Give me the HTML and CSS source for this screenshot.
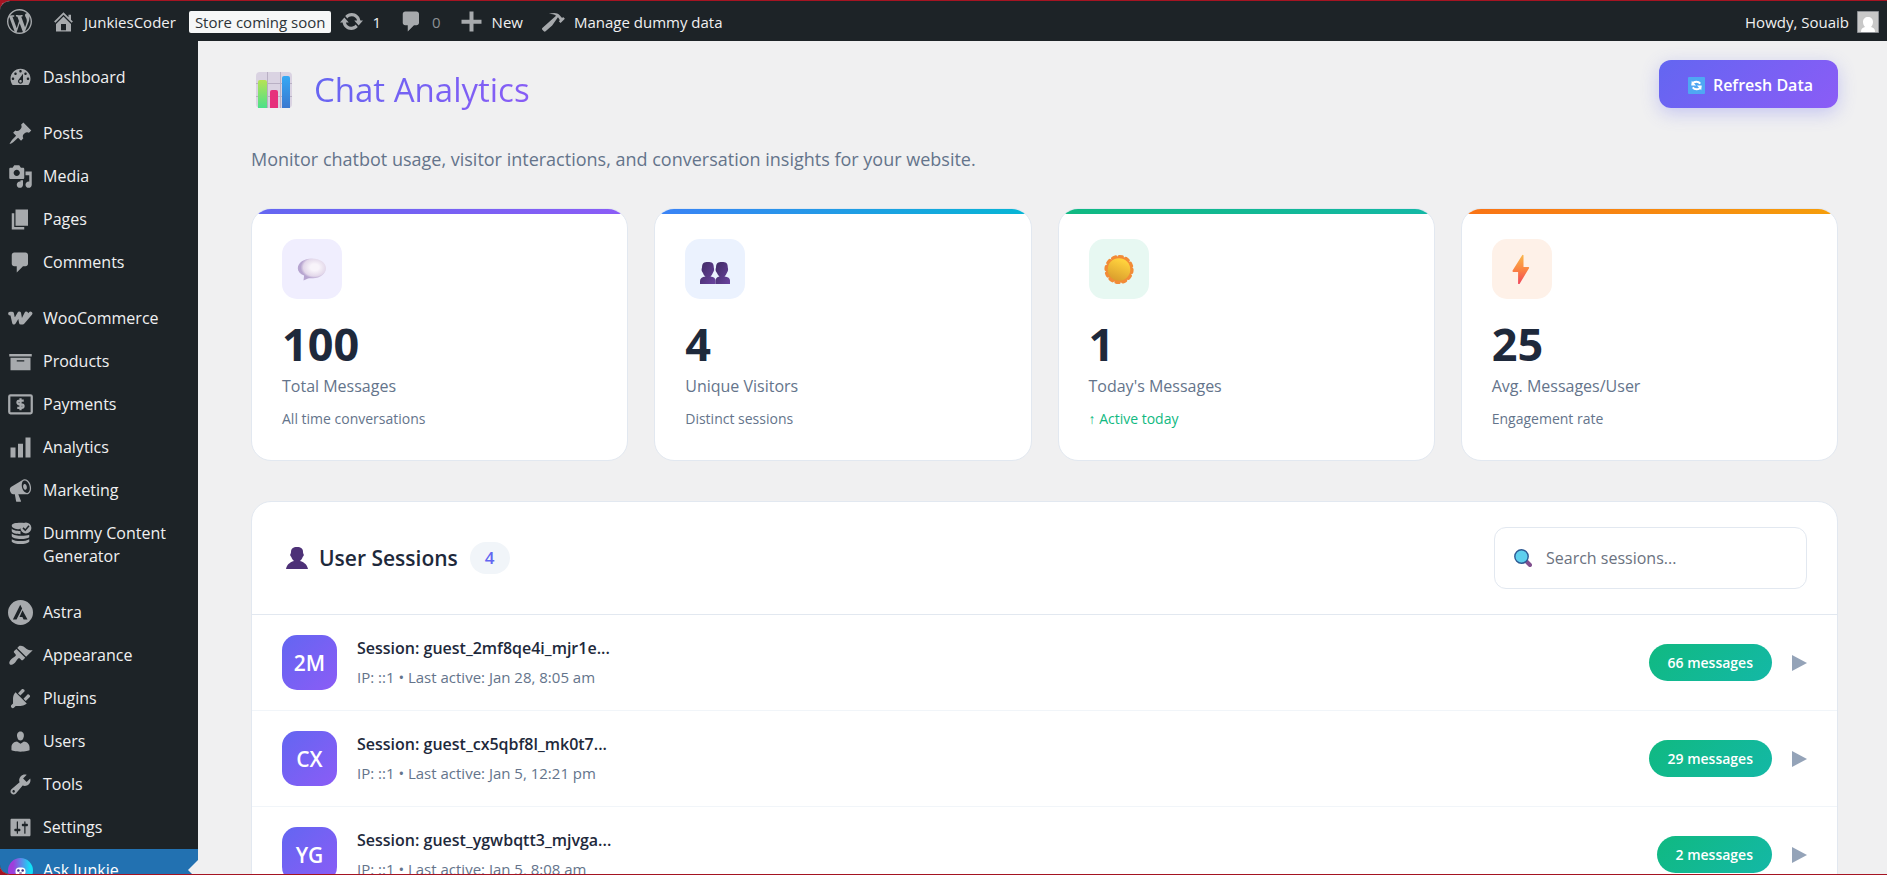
FILE: index.html
```html
<!DOCTYPE html>
<html lang="en">
<head>
    <meta charset="UTF-8">
    <meta name="viewport" content="width=device-width, initial-scale=1.0">
    <title>Chat Analytics</title>
    <link rel="stylesheet" href="styles.css">
</head>
<body>
    <header id="adminbar">
        <a href="#" class="bar-item bar-logo" aria-label="About WordPress"><svg viewBox="0 0 20 20"><path d="M20 10c0-5.51-4.49-10-10-10C4.48 0 0 4.49 0 10c0 5.52 4.48 10 10 10 5.51 0 10-4.48 10-10zM7.78 15.37L4.37 6.22c.55-.02 1.17-.08 1.17-.08.5-.06.44-1.13-.06-1.11 0 0-1.45.11-2.37.11-.18 0-.37 0-.58-.01C4.12 2.69 6.87 1.11 10 1.11c2.33 0 4.45.87 6.05 2.34-.68-.11-1.65.39-1.65 1.58 0 .74.45 1.36.9 2.1.35.61.55 1.36.55 2.46 0 1.49-1.4 5-1.4 5l-3.03-8.37c.54-.02.82-.17.82-.17.5-.05.44-1.25-.06-1.22 0 0-1.44.12-2.38.12-.87 0-2.33-.12-2.33-.12-.5-.03-.56 1.2-.06 1.22l.92.08 1.26 3.41zM17.41 10c.24-.64.74-1.87.43-4.25.7 1.29 1.05 2.71 1.05 4.25 0 3.29-1.73 6.24-4.4 7.78.97-2.59 1.94-5.2 2.92-7.78zM6.1 18.09C3.12 16.65 1.11 13.53 1.11 10c0-1.3.23-2.48.72-3.59C3.25 10.3 4.67 14.2 6.1 18.09zm4.03-6.63l2.58 6.98c-.86.29-1.76.45-2.71.45-.79 0-1.57-.11-2.29-.33.81-2.38 1.62-4.74 2.42-7.1z"/></svg></a>
        <a href="#" class="bar-item bar-site"><svg viewBox="0 0 20 20"><path d="M16 8.5l1.53 1.53-1.06 1.06L10 4.6l-6.47 6.49-1.06-1.06L10 2.5l4 4v-2h2v4zm-6-2.46l6 5.99V18H4v-5.97zM12 17v-5H8v5h4z"/></svg>JunkiesCoder</a>
        <a href="#" class="bar-badge">Store coming soon</a>
        <a href="#" class="bar-item bar-updates"><svg viewBox="0 0 20 20"><path d="M10.2 3.28c3.53 0 6.43 2.61 6.92 6h2.08l-3.5 4-3.5-4h2.32c-.45-1.97-2.21-3.45-4.32-3.45-1.45 0-2.73.71-3.54 1.78L4.95 5.66C6.23 4.2 8.11 3.28 10.2 3.28zm-.4 13.44c-3.52 0-6.43-2.61-6.92-6H.8l3.5-4c1.17 1.33 2.33 2.67 3.5 4H5.48c.45 1.97 2.21 3.45 4.32 3.45 1.45 0 2.73-.71 3.54-1.78l1.71 1.95c-1.28 1.46-3.15 2.38-5.25 2.38z"/></svg>1</a>
        <a href="#" class="bar-item bar-comments"><svg viewBox="0 0 20 20"><path d="M5 2h9c1.1 0 2 .9 2 2v7c0 1.1-.9 2-2 2h-2l-5 5v-5H5c-1.1 0-2-.9-2-2V4c0-1.1.9-2 2-2z"/></svg>0</a>
        <a href="#" class="bar-item bar-new"><svg viewBox="0 0 20 20"><path d="M18 8.500v3.200h-6.400V18H8.400v-6.300H2V8.500h6.400V2h3.200v6.500z"/></svg>New</a>
        <a href="#" class="bar-item bar-dummy"><svg viewBox="0 0 20 20"><path d="M17.7 6.32l1.41 1.42-3.47 3.41-1.42-1.42.84-.82c-.32-.76-.81-1.57-1.51-2.31l-4.61 6.59-5.26 4.7c-.39.39-1.02.39-1.42 0l-1.2-1.21c-.39-.39-.39-1.02 0-1.41l10.97-9.92c-1.37-.86-3.21-1.46-5.67-1.48 2.7-.82 4.95-.93 6.58-.3 1.7.66 2.82 2.2 3.91 3.58z"/></svg>Manage dummy data</a>
        <a href="#" class="bar-item bar-user">Howdy, Souaib
            <svg viewBox="0 0 22 22"><path fill="#c8c8c8" stroke="#8c8f94" d="M.5.5h21v21H.5z"/><path fill="#fff" d="M11 6c3 0 5 2 5 5 0 2-1 4-2 5 3 1 4 2 4 5H4c0-3 1-4 4-5-1-1-2-3-2-5 0-3 2-5 5-5z"/></svg>
        </a>
    </header>

    <div id="wrap">
        <nav id="adminmenu">
            <ul>
                <li><a href="#"><svg viewBox="0 0 20 20"><path d="M3.76 16h12.48c1.1-1.37 1.76-3.11 1.76-5 0-4.42-3.58-8-8-8s-8 3.58-8 8c0 1.89.66 3.63 1.76 5zM10 4c.55 0 1 .45 1 1s-.45 1-1 1-1-.45-1-1 .45-1 1-1zM6 6c.55 0 1 .45 1 1s-.45 1-1 1-1-.45-1-1 .45-1 1-1zm8 0c.55 0 1 .45 1 1s-.45 1-1 1-1-.45-1-1 .45-1 1-1zm-5.37 5.55L12 7v6c0 1.1-.9 2-2 2s-2-.9-2-2c0-.57.24-1.08.63-1.45zM4 10c.55 0 1 .45 1 1s-.45 1-1 1-1-.45-1-1 .45-1 1-1zm12 0c.55 0 1 .45 1 1s-.45 1-1 1-1-.45-1-1 .45-1 1-1zm-5 3c0-.55-.45-1-1-1s-1 .45-1 1 .45 1 1 1 1-.45 1-1z"/></svg>Dashboard</a></li>
            </ul>
            <ul>
                <li><a href="#"><svg viewBox="0 0 20 20"><path d="M10.44 3.02l1.82-1.82 6.36 6.35-1.83 1.82c-1.05-.68-2.48-.57-3.41.36l-.75.75c-.92.93-1.04 2.35-.35 3.41l-1.83 1.82-2.41-2.41-2.8 2.79c-.42.42-3.38 2.71-3.8 2.29s1.86-3.39 2.28-3.81l2.79-2.79L4.1 9.36l1.83-1.82c1.05.69 2.48.57 3.4-.36l.75-.75c.93-.92 1.05-2.35.36-3.41z"/></svg>Posts</a></li>
                <li><a href="#"><svg viewBox="0 0 20 20"><path d="M13 11V4c0-.55-.45-1-1-1h-1.67L9 1H5L3.67 3H2c-.55 0-1 .45-1 1v7c0 .55.45 1 1 1h10c.55 0 1-.45 1-1zM7 4.5c1.38 0 2.5 1.12 2.5 2.5S8.38 9.5 7 9.5 4.5 8.38 4.5 7 5.62 4.5 7 4.5zM14 6h5v10.5c0 1.38-1.12 2.5-2.5 2.5S14 17.88 14 16.5s1.12-2.5 2.5-2.5c.17 0 .34.02.5.05V9h-3V6zm-4 8.05V13h2v3.5c0 1.38-1.12 2.5-2.5 2.5S7 17.88 7 16.5 8.12 14 9.5 14c.17 0 .34.02.5.05z"/></svg>Media</a></li>
                <li><a href="#"><svg viewBox="0 0 20 20"><path d="M6 15V2h10v13H6zm-1 1h8v2H3V5h2v11z"/></svg>Pages</a></li>
                <li><a href="#"><svg viewBox="0 0 20 20"><path d="M5 2h9c1.1 0 2 .9 2 2v7c0 1.1-.9 2-2 2h-2l-5 5v-5H5c-1.1 0-2-.9-2-2V4c0-1.1.9-2 2-2z"/></svg>Comments</a></li>
            </ul>
            <ul>
                <li><a href="#"><svg viewBox="0 0 20 20"><path fill="none" stroke="currentColor" stroke-width="3" stroke-linecap="round" stroke-linejoin="round" d="M1.6 6h1.600l1.600 7.300L9 6l1.300 7.300h1.500L18 6M11 13.300L14.600 6"/></svg>WooCommerce</a></li>
                <li><a href="#"><svg viewBox="0 0 20 20"><path d="M19 4v2H1V4h18zM2 7h16v10H2V7zm11 3V9H7v1h6z"/></svg>Products</a></li>
                <li><a href="#"><svg viewBox="0 0 20 20"><rect x="1" y="2.6" width="18" height="14.4" rx="1" fill="none" stroke="currentColor" stroke-width="1.8"/><path fill="none" stroke="currentColor" stroke-width="1.8" d="M10 5v9.6M12.6 6.9H9.2c-2.2 0-2.2 2.9 0 2.9h1.6c2.2 0 2.2 2.9 0 2.9H7.4"/></svg>Payments</a></li>
                <li><a href="#"><svg viewBox="0 0 20 20"><path d="M18 18V2h-4v16h4zm-6 0V7H8v11h4zm-6 0v-8H2v8h4z"/></svg>Analytics</a></li>
                <li><a href="#"><svg viewBox="0 0 20 20"><path d="M18.15 5.94c.46 1.62.38 3.22-.02 4.48-.42 1.28-1.26 2.18-2.3 2.48-.16.06-.26.06-.4.06-.06.02-.12.02-.18.02-.06.02-.14.02-.22.02h-6.8l2.22 5.5c.02.14-.06.26-.14.34-.08.1-.24.16-.34.16H6.95c-.1 0-.26-.06-.34-.16-.08-.08-.16-.2-.14-.34l-1-5.5H4.25l-.02-.02c-.5.06-1.08-.18-1.54-.62s-.88-1.08-1.06-1.88c-.24-.8-.2-1.56-.02-2.2.18-.62.58-1.08 1.06-1.3l.02-.02 9-5.4c.1-.06.18-.1.24-.16.06-.04.14-.08.24-.12.16-.08.28-.12.5-.18 1.04-.3 2.24.1 3.22.98s1.84 2.24 2.26 3.86zm-2.58 5.98h-.02c.4-.1.74-.34 1.04-.7.58-.7.86-1.76.86-3.04 0-.64-.1-1.3-.28-1.98-.34-1.36-1.02-2.5-1.78-3.24s-1.68-1.1-2.46-.88c-.82.22-1.4.96-1.7 2-.32 1.04-.28 2.36.06 3.72.38 1.36 1 2.5 1.8 3.24.78.74 1.62 1.1 2.48.88zm-2.54-7.08c.22-.04.42-.02.62.04.38.16.76.48 1.02 1s.42 1.2.42 1.78c0 .3-.04.56-.12.8-.18.48-.44.84-.86.94-.34.1-.8-.06-1.14-.4s-.64-.86-.78-1.5c-.18-.62-.12-1.24.02-1.72s.48-.84.82-.94z"/></svg>Marketing</a></li>
                <li><a href="#"><svg viewBox="0 0 20 20"><path d="M3 3.500C3 1 14 1 15 2.500L9 6.500C6 6.500 3 5.500 3 3.500zM3 6c1 1.500 4 2 7 2v2.500c-3 0-7-.5-7-2.500zM3 10c2 2 10 2.500 14 1v2c-2 2-14 2-14-1zM3 14.500c3 2 11 2 14 0v2c-2 2.500-12 2.500-14 0z"/><circle cx="14.300" cy="5.500" r="4.400"/><path fill="none" stroke="#1d2327" stroke-width="1.200" d="M12 5.500l1.800 1.800 3-3.500"/></svg>Dummy Content Generator</a></li>
            </ul>
            <ul>
                <li><a href="#"><svg viewBox="0 0 20 20"><circle cx="10" cy="10" r="10"/><path fill="#1d2327" d="M9.800 3.800l1.500 3-4.500 8.800H3.900zM11.600 8.200l4 7.400h-3.100l-1-2.100H9.200z"/></svg>Astra</a></li>
                <li><a href="#"><svg viewBox="0 0 20 20"><path d="M14.48 11.06L7.41 3.99l1.5-1.5c.5-.56 2.3-.47 3.51.32 1.21.8 1.43 1.28 2.91 2.1 1.18.64 2.45 1.26 4.45.85zm-.71.71L6.7 4.7 4.93 6.47c-.39.39-.39 1.02 0 1.41l1.06 1.06c.39.39.39 1.03 0 1.42-.6.6-1.43 1.11-2.21 1.69-.35.26-.7.53-1.01.84C1.43 14.23.4 16.08 1.4 17.07c.99 1 2.84-.03 4.18-1.36.31-.31.58-.66.85-1.02.57-.78 1.08-1.61 1.69-2.21.39-.39 1.02-.39 1.41 0l1.06 1.06c.39.39 1.02.39 1.41 0z"/></svg>Appearance</a></li>
                <li><a href="#"><svg viewBox="0 0 20 20"><path d="M13.11 4.36L9.87 7.6 8 5.73l3.24-3.24c.35-.34 1.05-.2 1.56.32.52.51.66 1.21.31 1.55zm-8 1.77l.91-1.12 9.01 9.01-1.19.84c-.71.71-2.63 1.16-3.82 1.16H6.14L4.9 17.26c-.59.59-1.54.59-2.12 0-.59-.58-.59-1.53 0-2.12l1.24-1.24v-3.88c0-1.13.4-3.19 1.09-3.89zm7.26 3.97l3.24-3.24c.34-.35 1.04-.21 1.55.31.52.51.66 1.21.31 1.55l-3.24 3.25z"/></svg>Plugins</a></li>
                <li><a href="#"><svg viewBox="0 0 20 20"><path d="M10 9.25c-2.27 0-2.73-3.44-2.73-3.44C7 4.02 7.82 2 9.97 2c2.16 0 2.98 2.02 2.71 3.81 0 0-.41 3.44-2.68 3.44zm0 2.57L12.72 10c2.39 0 4.52 2.33 4.52 4.53v2.49s-3.65 1.13-7.24 1.13c-3.65 0-7.24-1.13-7.24-1.13v-2.49c0-2.25 1.94-4.48 4.47-4.48z"/></svg>Users</a></li>
                <li><a href="#"><svg viewBox="0 0 20 20"><path d="M16.68 9.77c-1.34 1.34-3.3 1.67-4.95.99l-5.41 6.52c-.99.99-2.59.99-3.58 0s-.99-2.59 0-3.57l6.52-5.42c-.68-1.65-.35-3.61.99-4.95 1.28-1.28 3.12-1.62 4.72-1.06l-2.89 2.89 2.82 2.82 2.86-2.87c.53 1.58.18 3.39-1.08 4.65zM3.81 16.21c.4.39 1.04.39 1.43 0 .4-.4.4-1.04 0-1.43-.39-.4-1.03-.4-1.43 0-.39.39-.39 1.03 0 1.43z"/></svg>Tools</a></li>
                <li><a href="#"><svg viewBox="0 0 20 20"><path d="M18 16V4c0-.55-.45-1-1-1H3c-.55 0-1 .45-1 1v12c0 .55.45 1 1 1h14c.55 0 1-.45 1-1zM8 11h1c.55 0 1 .45 1 1s-.45 1-1 1H8v1.5c0 .28-.22.5-.5.5s-.5-.22-.5-.5V13H6c-.55 0-1-.45-1-1s.45-1 1-1h1V5.500c0-.28.22-.5.5-.5s.5.22.5.5V11zm5-2h-1c-.55 0-1-.45-1-1s.45-1 1-1h1V5.500c0-.28.22-.5.5-.5s.5.22.5.5V7h1c.55 0 1 .45 1 1s-.45 1-1 1h-1v5.500c0 .28-.22.5-.5.5s-.5-.22-.5-.5V9z"/></svg>Settings</a></li>
                <li class="current"><a href="#"><svg viewBox="0 0 20 20"><defs><linearGradient id="junkie"><stop offset=".2" stop-color="#a03ddb"/><stop offset=".9" stop-color="#12e0f8"/></linearGradient></defs><circle cx="10" cy="10" r="10" fill="url(#junkie)"/><rect x="6" y="7.500" width="8" height="6.500" rx="3" fill="#fff"/><circle cx="8.300" cy="10" r="1" fill="#3b2a80"/><circle cx="11.700" cy="10" r="1" fill="#3b2a80"/><path stroke="#3b2a80" fill="none" stroke-width=".8" d="M9 12h2"/></svg>Ask Junkie</a></li>
            </ul>
        </nav>

        <main id="content">
            <div class="page-header">
                <h1>
                    <svg viewBox="0 0 36 36"><defs><linearGradient id="bar-g" x2="0" y2="1"><stop stop-color="#b6e354"/><stop offset="1" stop-color="#4ce08a"/></linearGradient><linearGradient id="bar-b" x2="0" y2="1"><stop stop-color="#35a9f5"/><stop offset="1" stop-color="#3b78cf"/></linearGradient></defs><rect width="36" height="36" rx="4" fill="#dad3e2"/><path stroke="#b9b0c4" d="M11.500 0v36M24.500 0v36M0 11.500h36M0 24.500h36"/><path fill="url(#bar-g)" d="M2 36V10q0-2 2-2h5q2 0 2 2v26z"/><path fill="#e6307c" d="M14 36V20q0-2 2-2h4q2 0 2 2v16z"/><path fill="url(#bar-b)" d="M26 36V6q0-2 2-2h4q2 0 2 2v30z"/></svg>
                    <span>Chat Analytics</span>
                </h1>
                <button type="button" class="btn-refresh"><svg viewBox="0 0 18 18"><rect width="18" height="18" rx="1" fill="#4fa7f3"/><path fill="none" stroke="#fff" stroke-width="2" d="M5 8.500V8q0-3 4-3 2.500 0 4 2M13 9.500v.5q0 3-4 3-2.500 0-4-2"/><path fill="#fff" d="M4 4l-.5 5h5zM14 14l.5-5h-5z"/></svg>Refresh Data</button>
            </div>
            <p class="page-desc">Monitor chatbot usage, visitor interactions, and conversation insights for your website.</p>

            <section class="stats">
                <div class="card card-total">
                    <div class="card-icon"><svg viewBox="0 0 30 30"><defs><radialGradient id="bubble" cx=".6" cy=".4"><stop offset=".3" stop-color="#f8f4fa"/><stop offset=".8" stop-color="#e3d8ea"/><stop offset="1" stop-color="#b7a5d0"/></radialGradient></defs><path fill="url(#bubble)" d="M15 4.500c8 0 14 4.300 14 9.800s-6 9.900-13 9.900c-2.500 0-4-.2-5 .4l-4.500 2 .6-5C3 20 .8 17.500.8 14.300.8 8.800 7 4.500 15 4.500z"/></svg></div>
                    <div class="card-value">100</div>
                    <div class="card-label">Total Messages</div>
                    <div class="card-note">All time conversations</div>
                </div>
                <div class="card card-visitors">
                    <div class="card-icon"><svg viewBox="0 0 30 30"><defs><linearGradient id="person" x2="1" y2="1"><stop stop-color="#3f2a63"/><stop offset="1" stop-color="#6b44a0"/></linearGradient></defs><path fill="url(#person)" d="M8 8c4 0 5.800 1 5.800 5.500.8 3-.3 4-1 5.500-.6 1.500-1.300 2.500-2.300 3.500q5 .5 5 4V31H0v-4q0-4 5.500-4.500C4 21.500 3.500 20.500 3 19c-1-1.500-2-2.500-1-5.500C2 9 4 8 8 8z"/><path fill="url(#person)" d="M22 8c4 0 5.800 1 5.800 5.500.8 3-.3 4-1 5.500-.6 1.500-1.300 2.500-2.300 3.500q5.500.5 5.500 4V31H15.500v-4q0-4 4-4.500c-1-1-2-2-2.500-3.500-1-1.500-2-2.500-1-5.500C16 9 18 8 22 8z"/></svg></div>
                    <div class="card-value">4</div>
                    <div class="card-label">Unique Visitors</div>
                    <div class="card-note">Distinct sessions</div>
                </div>
                <div class="card card-today">
                    <div class="card-icon"><svg viewBox="0 0 30 30"><defs><linearGradient id="sun" x1=".7" x2=".3" y2="1"><stop offset=".1" stop-color="#ffd23d"/><stop offset="1" stop-color="#d99c2c"/></linearGradient></defs><circle cx="15" cy="15.500" r="12.500" fill="#f28b36"/><circle cx="15" cy="15.500" r="12.600" fill="none" stroke="#f28b36" stroke-width="4" stroke-linecap="round" stroke-dasharray="2.600 4"/><circle cx="15" cy="15.500" r="11.300" fill="url(#sun)"/></svg></div>
                    <div class="card-value">1</div>
                    <div class="card-label">Today's Messages</div>
                    <div class="card-note note-up">↑ Active today</div>
                </div>
                <div class="card card-average">
                    <div class="card-icon"><svg viewBox="0 0 30 30"><defs><linearGradient id="bolt" x2="0" y2="1"><stop stop-color="#f9b74b"/><stop offset=".5" stop-color="#fb8442"/><stop offset="1" stop-color="#f0445c"/></linearGradient></defs><path fill="url(#bolt)" d="M15 1.500q.8-1.200 1.500-.2V13h5q1 .3.500 1.300L12.500 30q-1 .8-1.400-.2V18H6.200q-1.200-.4-.6-1.600z"/></svg></div>
                    <div class="card-value">25</div>
                    <div class="card-label">Avg. Messages/User</div>
                    <div class="card-note">Engagement rate</div>
                </div>
            </section>

            <section class="sessions">
                <div class="sessions-header">
                    <h2><svg viewBox="0 0 22 22"><path fill="#4d3177" d="M11 0c4 0 6 1.500 6 5 0 1.500.8 2 .8 3 0 1-1 1.500-1.300 2.500-.5 1.500-1.500 2.500-2.500 3.500 5 1.500 7 4 8 8H0c1-4 3-6.500 8-8-1-1-2-2-2.500-3.500C5.200 9.500 4.200 9 4.200 8c0-1 .8-1.500.8-3 0-3.500 2-5 6-5z"/></svg>User Sessions</h2>
                    <span class="count">4</span>
                    <label class="search">
                        <svg viewBox="0 0 18 18"><path stroke="#814f8e" stroke-width="4" stroke-linecap="round" d="M12.500 12.500l3.500 3.500"/><circle cx="7.500" cy="7.500" r="6.700" fill="#5fd0ee" stroke="#2e5a94" stroke-width="1.400"/></svg>
                        <input type="text" placeholder="Search sessions..." aria-label="Search sessions">
                    </label>
                </div>
                <div class="session">
                    <div class="avatar">2M</div>
                    <div class="info">
                        <div class="name">Session: guest_2mf8qe4i_mjr1e...</div>
                        <div class="meta">IP: ::1 • Last active: Jan 28, 8:05 am</div>
                    </div>
                    <span class="messages">66 messages</span>
                    <button type="button" class="toggle" aria-label="Show messages"></button>
                </div>
                <div class="session">
                    <div class="avatar">CX</div>
                    <div class="info">
                        <div class="name">Session: guest_cx5qbf8l_mk0t7...</div>
                        <div class="meta">IP: ::1 • Last active: Jan 5, 12:21 pm</div>
                    </div>
                    <span class="messages">29 messages</span>
                    <button type="button" class="toggle" aria-label="Show messages"></button>
                </div>
                <div class="session">
                    <div class="avatar">YG</div>
                    <div class="info">
                        <div class="name">Session: guest_ygwbqtt3_mjvga...</div>
                        <div class="meta">IP: ::1 • Last active: Jan 5, 8:08 am</div>
                    </div>
                    <span class="messages">2 messages</span>
                    <button type="button" class="toggle" aria-label="Show messages"></button>
                </div>
            </section>
        </main>
    </div>
</body>
</html>
```
FILE: styles.css
```css
*{
    box-sizing: border-box;
}
html{
    background: #a51422;
}
body{
    height: 100vh;
    margin: 0;
    border: solid #a51422;
    border-width: 1px 0;
    border-radius: 10px 0 0 10px;
    background: #f0f0f1;
    color: #1e293b;
    font-family: "Open Sans", "Noto Sans", sans-serif;
    font-size: 16px;
    display: flex;
    flex-direction: column;
    overflow: hidden;
}
a{
    color: inherit;
    text-decoration: none;
}
svg{
    display: block;
    flex: none;
    fill: currentColor;
}
h1, h2, p, ul{
    margin: 0;
    padding: 0;
    font-weight: 400;
}
button, input{
    font-family: inherit;
}

/* admin bar */
#adminbar{
    flex: none;
    height: 40px;
    padding: 1px 8px 0 7px;
    background: #1d2327;
    color: #f0f0f1;
    font-size: 15px;
    display: flex;
    align-items: center;
}
.bar-item{
    display: flex;
    align-items: center;
    gap: 8px;
}
.bar-item svg{
    width: 25px;
    height: 25px;
    color: #a7aaad;
}
.bar-site{
    margin-left: 19px;
}
.bar-badge{
    margin: 0 8px 0 13px;
    padding: 0 6px;
    border-radius: 2px;
    background: #f6f7f7;
    color: #2c3338;
    line-height: 22px;
}
.bar-comments{
    margin-left: 18px;
    color: #8c8f94;
}
.bar-new,
.bar-dummy{
    margin-left: 18px;
}
.bar-user{
    margin-left: auto;
}
.bar-user svg{
    width: 22px;
    height: 22px;
}

/* left menu */
#wrap{
    flex: 1;
    min-height: 0;
    display: flex;
}
#adminmenu{
    flex: none;
    width: 198px;
    padding-top: 15px;
    background: #1d2327;
    color: #f0f0f1;
}
#adminmenu ul{
    margin-bottom: 13px;
    list-style: none;
}
#adminmenu a{
    padding: 10px 8px;
    line-height: 23px;
    display: flex;
    gap: 10px;
}
#adminmenu svg{
    width: 25px;
    height: 25px;
    margin: -1px 0;
    color: #a7aaad;
}
#adminmenu .current{
    position: relative;
    background: #2271b1;
    color: #fff;
}
#adminmenu .current::after{
    content: "";
    position: absolute;
    right: 0;
    top: 11px;
    border: 10px solid transparent;
    border-right-color: #f0f0f1;
    border-left-width: 0;
}

/* page */
#content{
    flex: 1;
    min-width: 0;
    padding: 19px 49px 0 53px;
}
.page-header{
    display: flex;
    justify-content: space-between;
    align-items: flex-start;
}
h1{
    padding-left: 5px;
    font-size: 33px;
    line-height: 60px;
    display: flex;
    align-items: center;
    gap: 22px;
}
h1 svg{
    width: 36px;
    height: 36px;
}
h1 span{
    background: linear-gradient(135deg, #6366f1, #8b5cf6);
    -webkit-background-clip: text;
    background-clip: text;
    color: transparent;
}
.btn-refresh{
    height: 48px;
    padding: 2px 25px 0 29px;
    border: 0;
    border-radius: 12px;
    background: linear-gradient(135deg, #6366f1, #8b5cf6);
    box-shadow: 0 5px 18px rgba(99, 102, 241, .3);
    color: #fff;
    font-size: 16px;
    font-weight: 600;
    display: flex;
    align-items: center;
    gap: 8px;
    cursor: pointer;
}
.btn-refresh svg{
    width: 17px;
    height: 17px;
}
.page-desc{
    margin: 25px 0 35px;
    color: #64748b;
    font-size: 18px;
    line-height: 28px;
}

/* stat cards */
.stats{
    display: grid;
    grid-template-columns: repeat(4, 1fr);
    gap: 26px;
}
.card{
    position: relative;
    padding: 30px;
    border: 1px solid #e2e8f0;
    border-radius: 20px;
    background: #fff;
    overflow: hidden;
}
.card::before{
    content: "";
    position: absolute;
    top: 0;
    left: 0;
    right: 0;
    height: 5px;
}
.card-total::before{
    background: linear-gradient(90deg, #6366f1, #8b5cf6);
}
.card-visitors::before{
    background: linear-gradient(90deg, #3b82f6, #06b6d4);
}
.card-today::before{
    background: linear-gradient(90deg, #10b981, #14b8a6);
}
.card-average::before{
    background: linear-gradient(90deg, #f97316, #f59e0b);
}
.card-icon{
    width: 60px;
    height: 60px;
    margin-bottom: 20px;
    border-radius: 15px;
    display: flex;
    align-items: center;
    justify-content: center;
}
.card-icon svg{
    width: 30px;
    height: 30px;
}
.card-total .card-icon{
    background: #f0eefe;
}
.card-visitors .card-icon{
    background: #ebf2fe;
}
.card-today .card-icon{
    background: #e7f8f2;
}
.card-average .card-icon{
    background: #fef1e8;
}
.card-value{
    margin-bottom: 4px;
    font-size: 45px;
    font-weight: 700;
    line-height: 50px;
}
.card-label{
    color: #64748b;
    font-size: 16px;
    line-height: 26px;
}
.card-note{
    margin-top: 9px;
    color: #64748b;
    font-size: 14px;
    line-height: 22px;
}
.note-up{
    color: #10b981;
}

/* sessions */
.sessions{
    margin-top: 40px;
    border: 1px solid #e2e8f0;
    border-radius: 20px;
    background: #fff;
}
.sessions-header{
    padding: 25px 30px;
    border-bottom: 1px solid #e2e8f0;
    display: flex;
    align-items: center;
}
h2{
    padding-left: 4px;
    font-size: 21px;
    font-weight: 600;
    display: flex;
    align-items: center;
    gap: 11px;
}
h2 svg{
    width: 22px;
    height: 22px;
}
.count{
    margin-left: 12px;
    padding: 0 15px;
    border-radius: 16px;
    background: #f1f5f9;
    color: #6366f1;
    font-size: 17px;
    font-weight: 600;
    line-height: 32px;
}
.search{
    width: 313px;
    height: 62px;
    margin-left: auto;
    padding: 0 19px;
    border: 1px solid #e2e8f0;
    border-radius: 12px;
    display: flex;
    align-items: center;
    gap: 14px;
}
.search svg{
    width: 18px;
    height: 18px;
}
.search input{
    flex: 1;
    min-width: 0;
    padding: 0;
    border: 0;
    outline: 0;
    background: none;
    font-size: 16px;
}
.search input::placeholder{
    color: #6b7280;
}
.session{
    padding: 20px 30px;
    border-bottom: 1px solid #f1f5f9;
    display: flex;
    align-items: center;
    gap: 20px;
}
.session:last-child{
    border-bottom: 0;
}
.avatar{
    width: 55px;
    height: 55px;
    border-radius: 15px;
    background: linear-gradient(135deg, #6366f1, #8b5cf6);
    color: #fff;
    font-size: 21px;
    font-weight: 600;
    line-height: 56px;
    text-align: center;
}
.info{
    flex: 1;
    padding-bottom: 2px;
}
.name{
    margin-bottom: 6px;
    font-size: 16px;
    font-weight: 600;
    line-height: 24px;
}
.meta{
    color: #64748b;
    font-size: 15px;
    line-height: 22px;
}
.messages{
    padding: 0 19px;
    border-radius: 19px;
    background: linear-gradient(135deg, #10b981, #14b8a6);
    color: #fff;
    font-size: 14px;
    font-weight: 600;
    line-height: 37px;
}
.toggle{
    padding: 0;
    border: solid transparent;
    border-width: 8px 0 8px 15px;
    border-left-color: #94a3b8;
    background: none;
    cursor: pointer;
}
```
